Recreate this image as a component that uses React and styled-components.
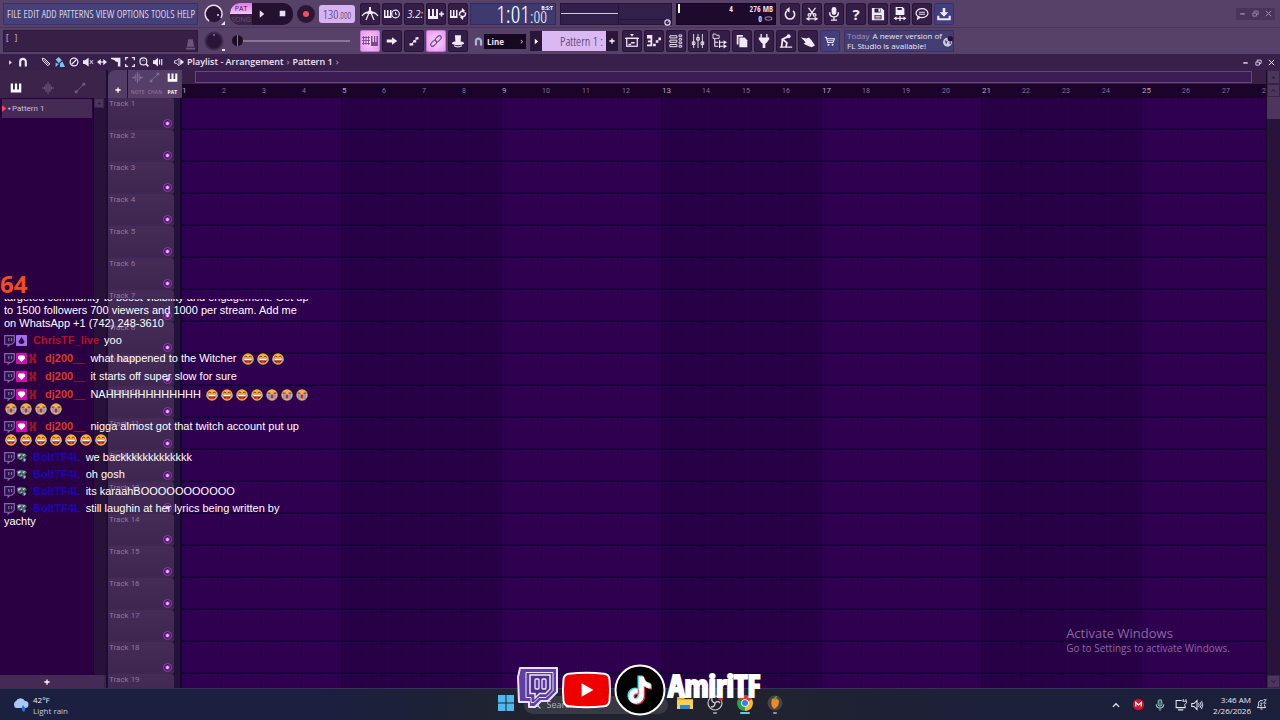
import React from "react";
import styled, { createGlobalStyle, css } from "styled-components";

const narrow = `"Open Sans Condensed", "Roboto Condensed", sans-serif`;
const light = `"Open Sans Condensed Light", "Open Sans Condensed", "Roboto Condensed", sans-serif`;
const small = `"Roboto", "Noto Sans", sans-serif`;
const ui = `"Open Sans", "Noto Sans", sans-serif`;

const GlobalStyle = createGlobalStyle`
  * { box-sizing: border-box; }
  body { margin: 0; background: #2b0048; font-family: ${ui}; color: #e9ddf2; overflow: hidden; }
  button, input, select { font: inherit; color: inherit; margin: 0; padding: 0; border: 0; background: none; }
  a { color: inherit; text-decoration: none; }
  svg { display: block; flex: none; overflow: visible; }
`;

/* ---------- shell ---------- */

const Desktop = styled.div`
  position: relative;
  display: flex;
  flex-direction: column;
  height: 100vh;
  min-width: 1100px;
`;

const Header = styled.header`
  background: #574168;
`;

const BarRow = styled.div`
  display: flex;
  align-items: center;
  height: 27px;
  padding: 0 5px 0 3px;
  gap: 4px;
  & + & { border-top: 1px solid #49345b; }
`;

const MenuBar = styled.nav`
  display: flex;
  align-items: center;
  justify-content: space-between;
  width: 195px;
  height: 22px;
  padding: 0 2px 0 3px;
  background: #453f7a;
  border: 1px solid #3a3166;
  font: 11px/14px ${light};
  color: #ffffff;
`;

const HintPanel = styled.div`
  display: flex;
  align-items: flex-start;
  justify-content: space-between;
  width: 195px;
  height: 22px;
  padding: 0 2px;
  background: #381f46;
  border: 1px solid #2d1839;
  font: 8px/12px ${narrow};
  color: #a790b8;
  svg { margin-top: 8px; }
`;

const Knob = styled.button`
  width: 23px;
  height: 22px;
  display: flex;
  align-items: center;
  justify-content: center;
`;

const Transport = styled.div`
  display: flex;
  align-items: center;
  width: 63px;
  height: 22px;
  margin-left: 1px;
  border-radius: 10px;
  background: #24102f;
  overflow: hidden;
`;

const ModeSwitch = styled.div`
  display: flex;
  flex-direction: column;
  width: 22px;
  height: 100%;
  background: #3b2547;
`;

const ModeButton = styled.button`
  height: 11px;
  font: 7px/11px ${ui};
  text-align: center;
  color: ${(p) => (p.$on ? "#3b1548" : "#69517a")};
  background: ${(p) => (p.$on ? "linear-gradient(#e07bea, #f6c4f8)" : "none")};
`;

const TransportButton = styled.button`
  flex: 1;
  height: 100%;
  display: flex;
  align-items: center;
  justify-content: center;
`;

const RecordButton = styled.button`
  width: 18px;
  height: 18px;
  border-radius: 50%;
  background: #2b1638;
  display: flex;
  align-items: center;
  justify-content: center;
  &::after { content: ""; width: 6px; height: 6px; border-radius: 50%; background: #f0525c; }
`;

const Tempo = styled.button`
  display: flex;
  align-items: baseline;
  justify-content: center;
  width: 36px;
  height: 18px;
  border-radius: 3px;
  background: #d6b4f2;
  color: #3f2654;
  font: 13px/18px ${light};
  small { font-size: 9px; }
`;

const ButtonGroup = styled.div`
  display: flex;
  gap: 2px;
  margin-left: ${(p) => p.$lead || 0}px;
`;

const toolTone = {
  dark: css`background: #341e47; border-color: #281436;`,
  lit: css`background: radial-gradient(#fdd4fb, #e795ee); border-color: #c377d0; color: #7c4a90;`,
  blue: css`background: #433f7c; border-color: #38316a;`,
};

const ToolButton = styled.button`
  display: flex;
  align-items: center;
  justify-content: center;
  width: 20px;
  height: 22px;
  border: 1px solid;
  border-radius: 2px;
  color: #f2eaf7;
  ${(p) => toolTone[p.$tone || "dark"]}
`;

const TimePanel = styled.div`
  position: relative;
  display: flex;
  align-items: baseline;
  justify-content: flex-end;
  width: 86px;
  height: 22px;
  padding-right: 8px;
  margin-left: -2px;
  background: #3d3a70;
  border: 1px solid #332b60;
  color: #fff;
  font: 24px/20px ${light};
  small { font-size: 17px; }
  sup { position: absolute; top: 1px; right: 2px; font: bold 5px/6px ${ui}; }
`;

const ScopePanel = styled.div`
  display: grid;
  grid-template-columns: 58px 1fr;
  width: 112px;
  height: 22px;
  background: #33204a;
  border: 1px solid #28153a;
`;

const Scope = styled.div`
  display: flex;
  align-items: center;
  justify-content: flex-end;
  border-right: 1px solid #28153a;
  &::before { content: ""; flex: 1; height: 1px; background: #d6c6e2; }
`;

const Meter = styled.div`
  display: flex;
  align-items: flex-end;
  justify-content: flex-end;
  height: 16px;
  margin-bottom: 4px;
  border-bottom: 1px solid #28153a;
  svg { margin-bottom: -7px; }
`;

const CpuPanel = styled.div`
  display: grid;
  grid-template-columns: 55px 1fr;
  width: 100px;
  height: 22px;
  padding: 0 2px 0 1px;
  background: #1e0a2c;
  border: 1px solid #160522;
  font: 8px/10px ${narrow};
  color: #eadff2;
  text-align: right;
`;

const CpuLoad = styled.div`
  border-left: 2px solid #fff;
  height: 9px;
`;

const MemoryLine = styled.div`
  display: flex;
  justify-content: flex-end;
  align-items: center;
  gap: 2px;
  grid-column: 2;
`;

const WindowButtons = styled.div`
  display: flex;
  margin-left: auto;
  background: ${(p) => (p.$boxed ? "#4a345b" : "none")};
`;

const WindowButton = styled.button`
  width: 13px;
  height: 12px;
  display: flex;
  align-items: center;
  justify-content: center;
  color: ${(p) => (p.$dim ? "#a592b3" : "#f2eaf7")};
`;

const Slider = styled.input`
  appearance: none;
  width: 118px;
  height: 12px;
  margin: 0 0 0 3px;
  &::-webkit-slider-runnable-track { height: 2px; background: #8a769a; }
  &::-webkit-slider-thumb {
    appearance: none; width: 11px; height: 11px; margin-top: -5px; border-radius: 50%;
    background: linear-gradient(90deg, #1e0d29 45%, #8a769a 45% 55%, #1e0d29 55%);
  }
`;

const SnapSelect = styled.select`
  appearance: none;
  width: 42px;
  height: 15px;
  padding-left: 3px;
  background: #160821;
  font: bold 8px/15px ${ui};
  color: #efe6f5;
`;

const SnapBox = styled.label`
  position: relative;
  display: flex;
  align-items: center;
  gap: 1px;
  padding-left: 2px;
  &::after { content: "›"; position: absolute; right: 3px; font: 9px/12px ${ui}; }
`;

const PatternPicker = styled.div`
  display: flex;
  width: 88px;
  height: 20px;
  background: #2a1636;
`;

const PatternStep = styled.button`
  width: 12px;
  display: flex;
  align-items: center;
  justify-content: center;
  color: #fff;
`;

const PatternName = styled.button`
  flex: 1;
  padding-right: 3px;
  background: #d9b8f4;
  color: #3f2654;
  font: 13px/19px ${light};
  text-align: right;
  white-space: nowrap;
`;

const NewsPanel = styled.a`
  display: flex;
  align-items: center;
  justify-content: space-between;
  width: 110px;
  height: 22px;
  padding: 0 3px 0 2px;
  background: #433d72;
  border: 1px solid #393064;
  font: 8px/10px ${ui};
  color: #efe6f5;
  white-space: nowrap;
  span { color: #a493c0; margin-right: 3px; }
`;

/* ---------- playlist window ---------- */

const TitleBar = styled.div`
  display: flex;
  align-items: center;
  height: 16px;
  padding: 0 2px 0 7px;
  gap: 3px;
  background: #38204a;
  color: #efe6f5;
`;

const TitleTool = styled.button`
  width: 11px;
  height: 14px;
  display: flex;
  align-items: center;
  justify-content: center;
  color: ${(p) => p.$color || "inherit"};
`;

const TitleTools = styled.div`
  display: flex;
  gap: 3px;
  margin: 0 8px 0 9px;
`;

const Crumbs = styled.h1`
  display: flex;
  align-items: center;
  gap: 3px;
  margin: 0;
  font: 600 9px/14px ${ui};
  white-space: nowrap;
  i { font-style: normal; color: #a08cb0; }
`;

const Workspace = styled.main`
  display: flex;
  flex: 1;
  min-height: 0;
  background: #1a0733;
`;

const Picker = styled.aside`
  display: flex;
  flex-direction: column;
  width: 108px;
  border-right: 2px solid #1f0c33;
  background: #3b2349;
`;

const PickerTabs = styled.div`
  display: flex;
  align-items: center;
  gap: 20px;
  height: 28px;
  padding: 8px 0 0 10px;
`;

const TabButton = styled.button`
  display: flex;
  color: ${(p) => (p.$on ? "#fff" : "#6d5480")};
`;

const PickerBody = styled.div`
  display: flex;
  flex: 1;
  min-height: 0;
`;

const PatternList = styled.div`
  flex: 1;
  padding: 1px 1px 0 2px;
  background: #2a0042;
  border-right: 1px solid #1b002c;
`;

const PatternItem = styled.button`
  display: flex;
  align-items: center;
  gap: 1px;
  width: 100%;
  height: 19px;
  background: #452a55;
  font: 8px/18px ${small};
  color: #d0bedb;
  text-align: left;
`;

const PickerScroll = styled.div`
  width: 12px;
  background: #28123a;
`;

const ScrollButton = styled.button`
  display: flex;
  align-items: center;
  justify-content: center;
  width: ${(p) => p.$w || 10}px;
  height: ${(p) => p.$h || 10}px;
  background: #4d365e;
  border: 1px solid #3a2349;
  color: #24102f;
`;

const AddPattern = styled.button`
  height: 13px;
  margin-right: 2px;
  padding-right: 10px;
  background: #452a55;
  display: flex;
  align-items: center;
  justify-content: center;
  color: #fff;
`;

const Arrangement = styled.section`
  display: flex;
  flex-direction: column;
  flex: 1;
  min-width: 0;
`;

const ArrangementHead = styled.div`
  display: flex;
  height: 28px;
  background: #3b2349;
`;

const AddTrack = styled.button`
  display: flex;
  align-items: flex-end;
  justify-content: center;
  width: 20px;
  padding-bottom: 5px;
  border-right: 1px solid #24102f;
  border-radius: 8px 0 0 0;
  background: #533c65;
  color: #fff;
`;

const ModeBox = styled.div`
  display: grid;
  grid-template-columns: repeat(3, 1fr);
  width: 54px;
  padding: 2px 1px;
  background: #553e67;
`;

const ModeTab = styled.button`
  display: flex;
  flex-direction: column;
  align-items: center;
  justify-content: space-between;
  font: bold 5px/7px ${ui};
  color: ${(p) => (p.$on ? "#fff" : "#806a90")};
`;

const Timeline = styled.div`
  flex: 1;
  min-width: 0;
  display: flex;
  flex-direction: column;
`;

const OverviewRow = styled.div`
  display: flex;
  align-items: center;
  height: 14px;
  padding: 0 14px 0 13px;
  background: #381f46;
`;

const Overview = styled.div`
  flex: 1;
  height: 12px;
  background: #3d1b55;
  border: 1px solid #66497c;
`;

const Ruler = styled.div`
  display: flex;
  height: 14px;
  overflow: hidden;
  background: #1b0329;
`;

const RulerMark = styled.span`
  flex: 0 0 40px;
  text-align: left;
  font: ${(p) => (p.$major ? 8 : 7)}px/14px ${small};
  color: ${(p) => (p.$major ? "#b7a5c4" : "#89749a")};
`;

const ArrangementBody = styled.div`
  display: flex;
  flex: 1;
  min-height: 0;
`;

const TrackList = styled.div`
  width: 74px;
  overflow: hidden;
  background: #21143a;
  border-right: 2px solid #140628;
`;

const Track = styled.div`
  display: flex;
  flex-direction: column;
  justify-content: space-between;
  width: 66px;
  height: 32px;
  padding: 0 2px 2px 1px;
  border-radius: 0 3px 3px 0;
  background: linear-gradient(#452c58, #3e2650);
  font: 8px/11px ${small};
  color: #8c7698;
`;

const TrackLed = styled.button`
  align-self: flex-end;
  width: 9px;
  height: 9px;
  border: 1px solid #9440b0;
  border-radius: 50%;
  background: radial-gradient(#f0b4ff 20%, #a040c4 35%, #38184c 60%);
`;

const Grid = styled.div`
  flex: 1;
  background:
    repeating-linear-gradient(180deg, transparent 0 30px, rgba(12, 0, 48, 0.4) 30px 31px, #100034 31px 32px),
    repeating-linear-gradient(90deg, transparent 0 39px, #18033e 39px 40px),
    repeating-linear-gradient(90deg, transparent 0 9px, rgba(20, 0, 60, 0.3) 9px 10px),
    repeating-linear-gradient(90deg, #2e004f 0 160px, #280045 160px 320px);
`;

const RightScroll = styled.div`
  display: flex;
  flex-direction: column;
  width: 14px;
  background: #281438;
  border-left: 1px solid #1b0a2a;
`;

const ScrollThumb = styled.div`
  height: 22px;
  margin-bottom: auto;
  background: #4d365e;
`;

/* ---------- taskbar ---------- */

const Taskbar = styled.footer`
  display: grid;
  grid-template-columns: 1fr auto 1fr;
  align-items: center;
  height: 32px;
  border-top: 1px solid #34325a;
  background: linear-gradient(90deg, #1b1f40 0, #1b1f40 25%, #20232f 40%, #20232f 60%, #1d2038 75%, #1a1f3b);
`;

const Weather = styled.button`
  display: flex;
  align-items: center;
  gap: 4px;
  padding-left: 12px;
  font: 8px/11px ${ui};
  text-align: left;
  color: #f0f0f6;
  div + div { color: #c9cade; }
`;

const TaskApps = styled.div`
  display: flex;
  align-items: center;
  gap: 12px;
`;

const SearchBox = styled.label`
  display: flex;
  align-items: center;
  width: 144px;
  height: 18px;
  padding-left: 8px;
  margin: 0 -4px 0 -3px;
  gap: 6px;
  border-radius: 9px;
  background: #373a45;
  color: #d8d8e0;
  input { width: 60px; font: 9px/14px ${ui}; outline: none; }
  input::placeholder { color: #b4b4be; opacity: 1; }
`;

const AppButton = styled.button`
  display: flex;
  flex-direction: column;
  align-items: center;
  gap: 1px;
  width: 18px;
  &::after {
    content: "";
    width: ${(p) => (p.$mark === "active" ? 10 : p.$mark ? 4 : 0)}px;
    height: 2px;
    border-radius: 1px;
    background: ${(p) => (p.$mark === "active" ? "#6cc3f2" : "#92939c")};
  }
`;

const Tray = styled.div`
  display: flex;
  align-items: center;
  justify-content: flex-end;
  padding-right: 13px;
  color: #e8e8f0;
`;

const TrayButton = styled.button`
  display: flex;
  margin-right: ${(p) => p.$after}px;
`;

const Clock = styled.time`
  margin-right: 5px;
  font: 8px/11px ${ui};
  text-align: right;
  white-space: nowrap;
`;

/* ---------- overlays ---------- */

const ViewerCount = styled.div`
  position: absolute;
  left: 0;
  top: 268px;
  font: bold 24px/32px ${ui};
  color: #f24d1f;
`;

const Chat = styled.section`
  position: absolute;
  left: 4px;
  top: 299px;
  width: 310px;
  height: 229px;
  display: flex;
  flex-direction: column;
  justify-content: flex-end;
  gap: 4px;
  overflow: hidden;
  font: 11px/13px "Liberation Sans", Arial, sans-serif;
  color: #fff;
`;

const lineHeight = { text: 13, emotes: 14, mixed: 15 };

const ChatLine = styled.div`
  display: flex;
  align-items: center;
  height: ${(p) => lineHeight[p.$kind]}px;
  white-space: nowrap;
`;

const Badges = styled.span`
  display: flex;
  gap: 1px;
  margin-right: 6px;
`;

const UserName = styled.b`
  margin-right: 5px;
  color: ${(p) => p.$color};
`;

const Emotes = styled.span`
  display: flex;
  gap: 3px;
  margin-left: ${(p) => (p.$lead ? 5 : 1)}px;
`;

const Socials = styled.div`
  position: absolute;
  left: 50%;
  bottom: 4px;
  margin-left: -123px;
  display: flex;
  align-items: center;
  gap: 2px;
`;

const Handle = styled.strong`
  padding-bottom: 10px;
  font: bold 31px/34px ${narrow};
  color: #fff;
  -webkit-text-stroke: 2px #fff;
`;

const Activation = styled.div`
  position: absolute;
  right: 50px;
  bottom: 65px;
  font: 10px/14px ${ui};
  color: #8a6aa2;
  div:first-child { font-size: 13px; line-height: 16px; }
`;

/* ---------- icons ---------- */

const Svg = ({ s = 16, w, h, vb = "0 0 16 16", children, ...rest }) => (
  <svg width={w || s} height={h || s} viewBox={vb} fill="none" stroke="currentColor" strokeWidth="1.4" aria-hidden="true" {...rest}>
    {children}
  </svg>
);
const f = { fill: "currentColor", stroke: "none" };

const shapes = {
  metronome: <><path d="M0 10c2-3 4-4 8-4s6 1 8 4" strokeWidth="1.3" /><path d="M8 2v5M7 7l-3 7M9 7l3 7" strokeWidth="1.2" /><path {...f} d="M7 1h2v3l2 4H5l2-4z" /></>,
  wait: <><path {...f} d="M0 4h1.500v6H3V4h1.500v6H6V4h1.500v8H0z" /><circle cx="11.500" cy="8" r="3.800" strokeWidth="1.200" /><path d="M11.500 6v2.300H13" strokeWidth="1" /></>,
  count: <text x="1" y="12" fontSize="10" fontStyle="italic" {...f}>3.2:</text>,
  stepAdd: <><path {...f} d="M0 3h2v7h2V3h2v7h2V3h2v10H0z" /><path d="M11 8h5M13.500 5.500v5" strokeWidth="1.600" /></>,
  loopKeys: <><path {...f} d="M0 4h1.500v6H3V4h1.500v6H6V4h1.500v8H0z" /><path d="M9.500 9.500c-.5-4 3-5.500 5-3M15.500 6.500c.5 4-3 5.500-5 3" /><path {...f} d="M12 2l3 2.500-3.500 2zM13 14l-3-2.500 3.500-2z" /></>,
  undo: <><path d="M4.500 4.500a5.300 5.300 0 1 0 7 0" strokeWidth="1.800" /><path {...f} d="M7.500 0v6.500L3.500 3z" /></>,
  cut: <><path d="M4 1l6 8M12 1L6 9" /><circle cx="5" cy="9" r="1.500" /><circle cx="11" cy="9" r="1.500" /><path d="M2 13.500h12" /><path {...f} d="M5 11v5l-4-2.500zM11 11v5l4-2.500z" /></>,
  mic: <><rect {...f} x="5.300" y="0" width="5.400" height="9" rx="2.700" /><path d="M3 6c0 7 10 7 10 0M8 11v4M4.500 15h7" strokeWidth="1.600" /></>,
  save: <><path {...f} fillRule="evenodd" d="M1 1h11l3 3v11H1zM4 1.800v4.400h7V1.800zM4 9v5h8V9z" /><path {...f} d="M8.500 2h2v3.500h-2zM5 10h6v1H5zM5 12h6v1H5z" /></>,
  saveNew: <><path {...f} fillRule="evenodd" d="M3 0h8l2 2v7H3zM5 1v2.500h5V1z" /><path d="M1 13h14M8 10v6" strokeWidth="1.500" /><path {...f} d="M4 10.500v5L1 13zM12 10.500v5l3-2.500z" /></>,
  chat: <><ellipse cx="8" cy="7" rx="6.800" ry="5.200" /><path {...f} d="M3 10l-1 5 5-3z" /><path d="M4.500 6h7M4.500 8.300h7" strokeWidth="1.100" /></>,
  download: <><path {...f} d="M6.500 1h3v5H13l-5 5-5-5h3.500z" /><path d="M1.500 10v4h13v-4" strokeWidth="2.400" /></>,
  pianoRoll: <><path d="M0 4.500h8M0 7.500h8M0 10.500h8M1.500 3v9M4 3v9M6.500 3v9" strokeWidth="0.900" /><path {...f} d="M9 3h1.500v6H12V3h1.200v6H14.500V3H16v10H9z" /></>,
  arrow: <path {...f} d="M1 6h7V3l7 5-7 5v-3H1z" />,
  slide: <><path d="M3 13c3 0 3-3 5-5s3-1 5-5" strokeWidth="1.300" /><path {...f} d="M2 11h5v3H2zM7 7h4v3H7zM10 3h4v3h-4z" /></>,
  link: <><rect x="-4.200" y="-2.200" width="8" height="4.400" rx="2.200" transform="translate(5.500 10.500) rotate(-45)" /><rect x="-3.800" y="-2.200" width="8" height="4.400" rx="2.200" transform="translate(10.500 5.500) rotate(-45)" /></>,
  hat: <><path {...f} d="M4.500 1.500h7L11 9H5z" /><ellipse cx="8" cy="10.500" rx="7" ry="2.300" {...f} /><path d="M3.500 13.500q4.500 2.500 9 0" strokeWidth="1.200" /></>,
  playlist: <><path {...f} d="M6 0h4L8 3z" /><path d="M0 5h16" strokeWidth="1.500" /><rect x="2" y="5" width="12" height="9" /><path d="M4 12h3M7 10h4" strokeWidth="1.600" /></>,
  rollKeys: <><path {...f} d="M0 1h6v13H0v-2h4v-2.500H1v-2h3V5H0z" /><path {...f} d="M7 11h3v3H7zM10 7h3v3h-3zM13 4h3v3h-3z" /></>,
  rack: <><path d="M1 2h8v2.500H1zM1 7h8v2.500H1zM1 12h8v2.500H1z" strokeWidth="1.100" /><path d="M11.500 1h3v2h-3zM11.500 5h3v2h-3zM11.500 9h3v2h-3zM11.500 13h3v2h-3z" strokeWidth="1" /></>,
  mixer: <><path d="M3 0v16M8 0v16M13 0v16" strokeWidth="1" /><path d="M1.500 9h3v3h-3zM6.500 4h3v3h-3zM11.500 9h3v3h-3z" strokeWidth="1.100" /></>,
  browser: <><path d="M0 0h3l1 1.500h3V5H0z" strokeWidth="1" /><path d="M2 5.500V14h4M2 9.500h4" strokeWidth="1.200" /><path d="M7.500 7v9M8 9.500h4M8 14h4" strokeWidth="1.200" /><path {...f} d="M12 7v5l4-2.500zM12 11.500v5l4-2.500z" /></>,
  pages: <><path {...f} d="M2 1h7v2H4v9H2z" /><path {...f} d="M5 4h6l3 3v8H5z" /></>,
  plug: <path {...f} d="M4 0h1.500v4h5V0H12v4h2v2l-3 4-1.500 1v5h-3v-5L5 10 2 6V4h2z" />,
  worker: <><circle {...f} cx="11" cy="2.500" r="2.300" /><path d="M10 3L4 6l5 4-1 5M4 6l-1 9" strokeWidth="2" /><path d="M1 15h14" /></>,
  pointer: <path {...f} d="M0 4l6 1 3-1 3 3 4 6-4 2-5-2-4-2 2-1-1-2z" />,
  cart: <><path d="M1 3h2l2 7h7l2-5H4" /><path d="M5.500 7.500h7" strokeWidth="1" /><circle {...f} cx="6" cy="13" r="1.300" /><circle {...f} cx="11.500" cy="13" r="1.300" /></>,
  magnet: <path d="M3.500 15V7.500a4.500 4.500 0 0 1 9 0V15" strokeWidth="3.400" />,
  pencil: <><path d="M2 2l4 1 8 8-3 3-8-8z" strokeWidth="1.600" /><path d="M5 5l7 7M7 4l7 7" strokeWidth="1.200" /></>,
  brush: <><path {...f} d="M1 4l5-4 5 5-5 5zM1 9l5 2-5 5zM8 10l4-3 4 9H8z" /></>,
  deny: <><circle cx="8" cy="8" r="6.200" strokeWidth="2" /><path d="M4 12l8-8" strokeWidth="2" /></>,
  mute: <><path {...f} d="M0 5h3l6-4v14l-6-4H0z" /><path d="M11 5l5 6M16 5l-5 6" strokeWidth="1.600" /></>,
  slip: <><path d="M2 8h12" strokeWidth="2" /><path {...f} d="M6 3v10L0 8zM10 3v10l6-5z" /></>,
  slice: <path {...f} d="M0 1h15v14h-4V8L7 7l-1-2-6-2z" />,
  select: <path d="M1 5V1h4M11 1h4v4M15 11v4h-4M5 15H1v-4" strokeWidth="1.900" />,
  magnify: <><circle cx="7" cy="7" r="5.500" strokeWidth="1.900" /><path d="M11 11l4 4" strokeWidth="2.600" /><path d="M5 7a2 2 0 0 1 4 0" strokeWidth="1" /></>,
  play: <><path {...f} d="M0 5h3l5-4v14l-5-4H0z" /><path d="M10.500 4v8M14 3v10" strokeWidth="1.800" /></>,
  speaker: <><path d="M1 6h3l4-4v12l-4-4H1z" /><path {...f} d="M10 3l6 5-6 5z" /></>,
  tri: <path {...f} d="M5 3l6 5-6 5z" />,
  square: <path {...f} d="M3 3h10v10H3z" />,
  plus: <path d="M8 1v14M1 8h14" strokeWidth="3.500" />,
  keys: <path {...f} d="M1 2h3v8h2.500V2h3v8H12V2h3v12H1z" />,
  wave: <path d="M0 8h3M13 8h3M3.500 6v4M5.500 3v10M8 0v16M10.500 3v10M12.500 6v4" strokeWidth="1.600" />,
  curve: <><path d="M4 12l8-8" strokeWidth="1.300" /><circle {...f} cx="3" cy="13" r="2.200" /><circle {...f} cx="13" cy="3" r="2.200" /></>,
  min: <path d="M3 9h10" strokeWidth="3" />,
  restore: <path d="M2 7h8v7H2zM5 7V2.500h9V10h-4" strokeWidth="1.800" />,
  close: <path d="M2 2l12 12M14 2L2 14" strokeWidth="2.200" />,
  dot: <circle {...f} cx="8" cy="8" r="2.500" />,
  up: <path d="M3 11l5-5 5 5" strokeWidth="2" />,
  down: <path d="M3 5l5 5 5-5" strokeWidth="2" />,
};
const Icon = ({ n, s = 14, ...r }) => <Svg s={s} {...r}>{shapes[n]}</Svg>;

const HelpMark = styled.b`
  font: bold 15px/18px ${ui};
`;

const Tool = ({ n, tone, s = 14 }) => (
  <ToolButton $tone={tone} aria-label={n}>{n === "help" ? <HelpMark>?</HelpMark> : <Icon n={n} s={s} />}</ToolButton>
);

const Laugh = () => (
  <Svg s={12} stroke="none">
    <circle cx="8" cy="8" r="7.600" fill="#f6ae3c" />
    <path d="M2.500 8h11a5.500 5.500 0 0 1-11 0z" fill="#7a1424" />
    <path d="M3 8h10v1.800H3z" fill="#fff" />
    <path d="M3 5.500q2-2.500 4 0M9 5.500q2-2.500 4 0" stroke="#5b2a14" strokeWidth="1.200" />
    <path d="M5 12q3-2 6 0-3 2.500-6 0" fill="#ee4650" />
    <path d="M0 8q2-1 3 0-.5 3-2 3zM16 8q-2-1-3 0 .5 3 2 3z" fill="#6db3ea" />
  </Svg>
);
const Cry = () => (
  <Svg s={12} stroke="none">
    <circle cx="8" cy="8" r="7.600" fill="#f6b04a" />
    <path d="M2.500 6h3.300v8.500L2.500 13zM10.200 6h3.300v7l-3.300 1.500z" fill="#7c9de0" />
    <path d="M2 5.500h4M10 5.500h4" stroke="#5b2a14" strokeWidth="1.200" />
    <ellipse cx="8" cy="10" rx="1.900" ry="3" fill="#c22a3a" />
  </Svg>
);
const TwitchMark = () => (
  <Svg s={11}>
    <path d="M1 1h14v9l-3.500 3.500H8.500L6 16v-2.500H1z" stroke="#8a62bb" strokeWidth="1.700" fill="#2a1540" />
    <path d="M7 4.500v4.500M11 4.500v4.500" stroke="#8a62bb" strokeWidth="1.800" />
  </Svg>
);
const DropBadge = () => (
  <Svg s={11} stroke="none"><rect width="16" height="16" rx="1" fill="#a56cf0" /><path d="M8 3l4 6a4 4 0 1 1-8 0z" fill="#25123e" /></Svg>
);
const HeartBadge = () => (
  <Svg s={11} stroke="none"><rect width="16" height="16" rx="1" fill="#cf0fae" /><path d="M8 13L3 8V5l2-1.500h6L13 5v3z" fill="#fff" /></Svg>
);
const RedBadge = () => (
  <Svg w={11} h={11} vb="-1 0 16 16" stroke="none"><path d="M1 1h4v5l1 1 1-1V1h4v5L9 8l2 2v5H7v-4l-1-1-1 1v4H1v-5l2-2-2-2z" fill="#9c1424" /></Svg>
);
const MaskBadge = () => (
  <Svg s={11} stroke="none"><path d="M1 3l5-2 7 1 3 3-3 3 2 3-3 4-3-2 1-3-4 2-4-3z" fill="#49696e" /><path d="M3 4l4-1-1 3-3 1zM9 4l5-1-3 3zM6 9l3-1-1 2zM11 10l3 1-1 3z" fill="#cfe0da" /><path d="M5 6l3 1-2 1z" fill="#0e1822" /></Svg>
);

const TwitchLogo = () => (
  <svg width="42" height="46" viewBox="0 0 42 46" aria-hidden="true">
    <path d="M3 1h37v24l-9 9h-7l-6 6h-6v-5H2L1 10z" fill="#5f3fa4" stroke="#e9e0f5" strokeWidth="2" strokeLinejoin="round" />
    <path d="M9 5.500h27v18l-7 7h-7l-5 5h-3v-5H9z" fill="#5b3c9c" stroke="#efe6fa" strokeWidth="1" />
    <path d="M13 8h20v14l-4.500 4.500h-6L18 31v-4.500h-5z" fill="#4a2f8c" stroke="#efe6fa" strokeWidth="1.500" />
    <rect x="18" y="12" width="4" height="10" rx="1" fill="#5b3c9c" stroke="#efe6fa" strokeWidth="1.300" />
    <rect x="25" y="12" width="4" height="10" rx="1" fill="#5b3c9c" stroke="#efe6fa" strokeWidth="1.300" />
  </svg>
);
const YoutubeLogo = () => (
  <svg width="51" height="38" viewBox="0 0 52 38" aria-hidden="true">
    <path d="M8 2.500q18-2 36 0 5 .5 5.500 6 1 10 0 21-.5 5.500-5.500 6-18 2-36 0-5-.5-5.500-6-1-10.500 0-21 .5-5.500 5.500-6z" fill="#ee0000" stroke="#fff" strokeWidth="2" />
    <path d="M21 12l12 7-12 7z" fill="#fff" />
  </svg>
);
const note = "M24 12h5c.5 4 3 6.500 7 7v5c-3 0-5-1-7-2.500V31c0 10-14 11-15 2-.5-6 4-9.500 9-9v5c-3-.5-4.500 1-4.300 3 .5 3.500 5.300 3 5.300-1z";
const TiktokLogo = () => (
  <svg width="52" height="52" viewBox="0 0 52 52" aria-hidden="true">
    <circle cx="26" cy="26" r="24.500" fill="#000" stroke="#fff" strokeWidth="2" />
    <path d={note} fill="#25e4e0" transform="translate(-.5 -.5)" />
    <path d={note} fill="#f5294f" transform="translate(2 1.500)" />
    <path d={note} fill="#fff" transform="translate(.8 .5)" />
  </svg>
);

/* ---------- content ---------- */

const menus = ["FILE", "EDIT", "ADD", "PATTERNS", "VIEW", "OPTIONS", "TOOLS", "HELP"];
const fileTools = ["undo", "cut", "mic", "help", "save", "saveNew", "chat"];
const viewTools = ["playlist", "rollKeys", "rack", "mixer", "browser", "pages", "plug", "worker", "pointer"];
const editTools = ["pencil", "brush", "deny", "mute", "slip", "slice", "select", "magnify", "play"];

const dj = { name: "dj200__", color: "#d93a2c", badges: [HeartBadge, RedBadge] };
const bolt = { name: "BoltTF4L", color: "#1c00bb", badges: [MaskBadge] };
const chris = { name: "ChrisTF_live", color: "#b80f26", badges: [DropBadge] };
const L = (n) => Array(n).fill(Laugh);
const C = (n) => Array(n).fill(Cry);

const messages = [
  { lines: [
    { text: "targeted community to boost visibility and engagement! Get up" },
    { text: "to 1500 followers 700 viewers and 1000 per stream. Add me" },
    { text: "on WhatsApp +1 (742) 248-3610" },
  ] },
  { user: chris, lines: [{ text: "yoo" }] },
  { user: dj, lines: [{ text: "what happened to the Witcher", emotes: L(3) }] },
  { user: dj, lines: [{ text: "it starts off super slow for sure" }] },
  { user: dj, lines: [{ text: "NAHHHHHHHHHHHH", emotes: [...L(4), ...C(3)] }, { emotes: C(4) }] },
  { user: dj, lines: [{ text: "nigga almost got that twitch account put up" }, { emotes: L(7) }] },
  { user: bolt, lines: [{ text: "we backkkkkkkkkkkkk" }] },
  { user: bolt, lines: [{ text: "oh gosh" }] },
  { user: bolt, lines: [{ text: "its karaahBOOOOOOOOOOO" }] },
  { user: bolt, lines: [{ text: "still laughin at her lyrics being written by" }, { text: "yachty" }] },
];

const lineKind = (line) => (!line.emotes ? "text" : line.text ? "mixed" : "emotes");

const Message = ({ user, lines }) => (
  <div>
    {lines.map((line, i) => (
      <ChatLine key={i} $kind={lineKind(line)}>
        {user && i === 0 && (
          <>
            <Badges><TwitchMark />{user.badges.map((B, k) => <B key={k} />)}</Badges>
            <UserName $color={user.color}>{user.name}</UserName>
          </>
        )}
        {line.text}
        {line.emotes && <Emotes $lead={!!line.text}>{line.emotes.map((E, k) => <E key={k} />)}</Emotes>}
      </ChatLine>
    ))}
  </div>
);

const WinControls = ({ dim }) => (
  <WindowButtons $boxed={dim}>
    {["min", "restore", "close"].map((n) => (
      <WindowButton key={n} $dim={dim} aria-label={n}><Icon n={n} s={7} /></WindowButton>
    ))}
  </WindowButtons>
);

function TopBars() {
  return (
    <Header>
      <BarRow>
        <MenuBar>{menus.map((m) => <a key={m} href="#menu">{m}</a>)}</MenuBar>
        <Knob aria-label="Main volume">
          <Svg s={22} vb="0 0 22 22">
            <circle cx="11" cy="11" r="7.500" fill="#2a1537" stroke="#2a1537" />
            <path d="M6 18a8.500 8.500 0 1 1 12-3" stroke="#e8def0" strokeWidth="1.500" />
            <circle cx="15" cy="12" r="1" {...f} />
            <path {...f} d="M22 18v4h-4z" />
          </Svg>
        </Knob>
        <Transport>
          <ModeSwitch>
            <ModeButton $on>PAT</ModeButton>
            <ModeButton>SONG</ModeButton>
          </ModeSwitch>
          <TransportButton aria-label="Play"><Icon n="tri" s={12} /></TransportButton>
          <TransportButton aria-label="Stop"><Icon n="square" s={9} /></TransportButton>
        </Transport>
        <RecordButton aria-label="Record" />
        <Tempo>130<small>.000</small></Tempo>
        <ButtonGroup $lead={1}>
          {["metronome", "wait", "count", "stepAdd", "loopKeys"].map((n) => <Tool key={n} n={n} s={16} />)}
        </ButtonGroup>
        <TimePanel>1:01<small>:00</small><sup>B:S:T</sup></TimePanel>
        <ScopePanel>
          <Scope />
          <Meter><Svg s={7}><circle cx="8" cy="8" r="6" strokeWidth="2.500" /><path d="M8 8l4-3" strokeWidth="2" /></Svg></Meter>
        </ScopePanel>
        <CpuPanel>
          <CpuLoad>4</CpuLoad>
          <div>276 MB</div>
          <MemoryLine>0<Svg s={9}><ellipse cx="8" cy="8" rx="6" ry="3" stroke="#8b7a99" strokeWidth="2" /></Svg></MemoryLine>
        </CpuPanel>
        <ButtonGroup>
          {fileTools.map((n) => <Tool key={n} n={n} />)}
          <Tool n="download" tone="blue" />
        </ButtonGroup>
        <WinControls dim />
      </BarRow>
      <BarRow>
        <HintPanel>[&nbsp;&nbsp;&nbsp;]<Svg w={9} h={11} vb="0 0 12 14"><path d="M3 0h6l2 10H1z" fill="#6d5580" stroke="none" /><path d="M0 12.500h12" stroke="#6d5580" strokeWidth="2.500" /></Svg></HintPanel>
        <Knob aria-label="Main pitch">
          <Svg s={22} vb="0 0 22 22">
            <circle cx="11" cy="11" r="8.500" fill="#2a1537" stroke="#3f2b50" strokeWidth="2" />
            <circle cx="11" cy="5" r="1" fill="#8c779c" stroke="none" />
            <path {...f} d="M19 19h3v2h-3z" />
          </Svg>
        </Knob>
        <Slider type="range" min="0" max="100" defaultValue="0" aria-label="Song position" />
        <ButtonGroup $lead={6}>
          <Tool n="pianoRoll" tone="lit" s={16} />
          <Tool n="arrow" s={12} />
          <Tool n="slide" s={12} />
          <Tool n="link" tone="lit" />
          <Tool n="hat" />
        </ButtonGroup>
        <SnapBox>
          <Svg s={9}><path d="M3.500 15V7.500a4.500 4.500 0 0 1 9 0V15" stroke="#a9b2d8" strokeWidth="4" /></Svg>
          <SnapSelect aria-label="Snap"><option>Line</option></SnapSelect>
        </SnapBox>
        <PatternPicker>
          <PatternStep aria-label="Pattern menu"><Icon n="tri" s={9} /></PatternStep>
          <PatternName>Pattern 1 :</PatternName>
          <PatternStep aria-label="Add pattern"><Icon n="plus" s={6} /></PatternStep>
        </PatternPicker>
        <ButtonGroup>
          {viewTools.map((n) => <Tool key={n} n={n} />)}
          <Tool n="cart" tone="blue" s={12} />
        </ButtonGroup>
        <NewsPanel href="#news">
          <div><span>Today</span>A newer version of<br />FL Studio is available!</div>
          <Svg s={11}><circle cx="8" cy="9" r="6.500" fill="#c9c9dc" stroke="none" /><path d="M4 6l4 2-2 4zM10 10l3-2v4z" fill="#433d72" stroke="none" /><circle cx="12" cy="4" r="4" fill="#24122f" stroke="none" /></Svg>
        </NewsPanel>
      </BarRow>
    </Header>
  );
}

function Playlist() {
  return (
    <>
      <TitleBar>
        <Icon n="tri" s={7} />
        <TitleTool aria-label="Snap"><Icon n="magnet" s={10} /></TitleTool>
        <TitleTools>
          {editTools.map((n) => (
            <TitleTool key={n} aria-label={n} $color={n === "brush" ? "#7cc3ec" : undefined}><Icon n={n} s={10} /></TitleTool>
          ))}
        </TitleTools>
        <Crumbs><Icon n="speaker" s={10} />Playlist - Arrangement<i>›</i>Pattern 1<i>›</i></Crumbs>
        <WinControls />
      </TitleBar>
      <Workspace>
        <Picker>
          <PickerTabs>
            <TabButton $on aria-label="Patterns"><Icon n="keys" s={12} /></TabButton>
            <TabButton aria-label="Audio"><Icon n="wave" s={12} /></TabButton>
            <TabButton aria-label="Automation"><Icon n="curve" s={12} /></TabButton>
          </PickerTabs>
          <PickerBody>
            <PatternList>
              <PatternItem><Svg w={9} h={9}><path d="M0 2l8 6-8 6z" fill="#f0485c" stroke="none" /><circle cx="13" cy="8" r="2" {...f} /></Svg>Pattern 1</PatternItem>
            </PatternList>
            <PickerScroll><ScrollButton aria-label="Scroll up"><Icon n="dot" s={7} /></ScrollButton></PickerScroll>
          </PickerBody>
          <AddPattern aria-label="Add pattern"><Icon n="plus" s={6} /></AddPattern>
        </Picker>
        <Arrangement>
          <ArrangementHead>
            <AddTrack aria-label="Add track"><Icon n="plus" s={6} /></AddTrack>
            <ModeBox>
              <ModeTab><Icon n="wave" s={11} />NOTE</ModeTab>
              <ModeTab><Icon n="curve" s={11} />CHAN</ModeTab>
              <ModeTab $on><Icon n="keys" s={11} />PAT</ModeTab>
            </ModeBox>
            <Timeline>
              <OverviewRow><Overview /></OverviewRow>
              <Ruler>
                {Array.from({ length: 28 }, (_, i) => (
                  <RulerMark key={i} $major={i % 4 === 0}>{i + 1}</RulerMark>
                ))}
              </Ruler>
            </Timeline>
          </ArrangementHead>
          <ArrangementBody>
            <TrackList>
              {Array.from({ length: 19 }, (_, i) => (
                <Track key={i}>Track {i + 1}<TrackLed aria-label={`Mute track ${i + 1}`} /></Track>
              ))}
            </TrackList>
            <Grid />
          </ArrangementBody>
        </Arrangement>
        <RightScroll>
          <ScrollButton $w={13} $h={14} aria-label="Options"><Icon n="dot" s={7} /></ScrollButton>
          <ScrollButton $w={13} $h={13} aria-label="Scroll up"><Icon n="up" s={7} /></ScrollButton>
          <ScrollThumb />
          <ScrollButton $w={13} $h={13} aria-label="Scroll down"><Icon n="down" s={7} /></ScrollButton>
        </RightScroll>
      </Workspace>
    </>
  );
}

function WindowsTaskbar() {
  return (
    <Taskbar>
      <Weather>
        <Svg w={17} h={16} vb="0 0 17 16" stroke="none"><path d="M4 11a4 4 0 0 1 0-7 5 5 0 0 1 9 0 3.500 3.500 0 0 1 0 7z" fill="#a9c8f4" /><path d="M11 8q4 4 1 7-4-2-1-7z" fill="#2a6fd6" /></Svg>
        <div><div>42°F</div><div>Light rain</div></div>
      </Weather>
      <TaskApps>
        <AppButton aria-label="Start"><Svg s={16} stroke="none"><path d="M0 0h7.500v7.500H0zM8.500 0H16v7.500H8.500zM0 8.500h7.500V16H0zM8.500 8.500H16V16H8.500z" fill="#4fb8ee" /></Svg></AppButton>
        <SearchBox>
          <Svg s={9}><circle cx="6.500" cy="6.500" r="5" strokeWidth="2" /><path d="M10 10l5 5" strokeWidth="2" /></Svg>
          <input placeholder="Search" aria-label="Search" />
        </SearchBox>
        <AppButton aria-label="File Explorer"><Svg s={16} stroke="none"><path d="M0 2h6l2 2h8v4H0z" fill="#e8a91c" /><path d="M0 5h16v9H0z" fill="#fbd24e" /><path d="M3 10h10v4H3z" fill="#2b8ad8" /></Svg></AppButton>
        <AppButton $mark="open" aria-label="OBS Studio"><Svg s={16}><circle cx="8" cy="8" r="7" fill="#20212a" stroke="#c7c7cd" strokeWidth="1.200" /><path d="M8 8q-4-1-3-5M8 8q3-3 5 0M8 8q0 4-4 4" strokeWidth="1.400" stroke="#c7c7cd" /><circle cx="13.500" cy="3" r="2.500" fill="#e0202c" stroke="none" /></Svg></AppButton>
        <AppButton $mark="active" aria-label="Chrome"><Svg s={16} stroke="none"><path d="M8 8L1.100 4A8 8 0 0 1 14.900 4z" fill="#e33b2e" /><path d="M8 8l6.900-4A8 8 0 0 1 8 16z" fill="#f9bb2d" /><path d="M8 8v8A8 8 0 0 1 1.100 4z" fill="#2ba24c" /><circle cx="8" cy="8" r="3.800" fill="#fff" /><circle cx="8" cy="8" r="3" fill="#3b7cec" /></Svg></AppButton>
        <AppButton $mark="open" aria-label="FL Studio"><Svg s={16} stroke="none"><circle cx="8" cy="8" r="7.500" fill="#47444c" /><path d="M5 4q5-2 7 2 0 6-5 8-4-4-2-10z" fill="#f08a24" /><path d="M7 5q0-4 3-4l-1 4z" fill="#5aa83a" /></Svg></AppButton>
      </TaskApps>
      <Tray>
        <TrayButton $after={12} aria-label="Hidden icons"><Icon n="up" s={10} /></TrayButton>
        <TrayButton $after={10} aria-label="Mega"><Svg s={11} stroke="none"><circle cx="8" cy="8" r="8" fill="#d8152a" /><path d="M4 11V5l4 3.500L12 5v6" stroke="#fff" strokeWidth="1.800" /></Svg></TrayButton>
        <TrayButton $after={9} aria-label="Microphone"><Svg s={12}><rect x="5.500" y="1" width="5" height="8.500" rx="2.500" stroke="#7fb5b0" fill="#3c6a6c" /><path d="M3 7c0 6.500 10 6.500 10 0M8 12v3.500" stroke="#a5c8c6" /></Svg></TrayButton>
        <TrayButton $after={4} aria-label="Network"><Svg s={12}><path d="M9 2H1.500v9.500h12V9M4 14.500h7" /><path d="M11 0v3M14.500 0v3M10 3h5.500v2L13 7v2" strokeWidth="1.200" /></Svg></TrayButton>
        <TrayButton $after={10} aria-label="Volume"><Svg s={12}><path d="M1 6h3l4-4v12l-4-4H1z" /><path d="M10 5.500q2 2.500 0 5M12 4q3 4 0 8M14 2.500q3.500 5.500 0 11" strokeWidth="1.200" /></Svg></TrayButton>
        <Clock>3:46 AM<br />2/26/2026</Clock>
        <TrayButton $after={0} aria-label="Notifications"><Svg s={11}><path d="M10 2.500Q4 1 3.500 7v3L2 12.500h12L12.500 10V8M6.500 14.500h3" /><path d="M11 1h4l-4 5h4M6 6h3L6 10h3" strokeWidth="1.200" /></Svg></TrayButton>
      </Tray>
    </Taskbar>
  );
}

export default function App() {
  return (
    <Desktop>
      <GlobalStyle />
      <TopBars />
      <Playlist />
      <WindowsTaskbar />
      <ViewerCount>64</ViewerCount>
      <Chat>{messages.map((m, i) => <Message key={i} {...m} />)}</Chat>
      <Activation><div>Activate Windows</div><div>Go to Settings to activate Windows.</div></Activation>
      <Socials>
        <TwitchLogo /><YoutubeLogo /><TiktokLogo />
        <Handle>AmiriTF</Handle>
      </Socials>
    </Desktop>
  );
}
